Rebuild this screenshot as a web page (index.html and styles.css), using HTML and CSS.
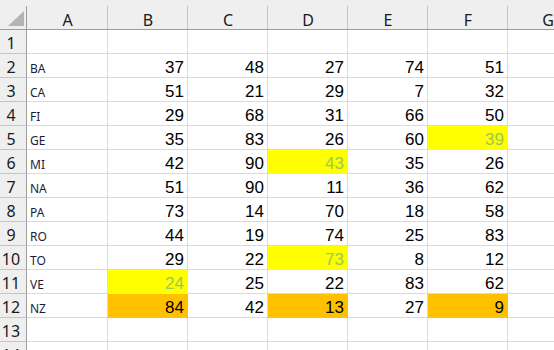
FILE: index.html
```html
<!DOCTYPE html>
<html lang="en">
<head>
  <meta charset="UTF-8">
  <title>Sheet1</title>
  <link rel="stylesheet" href="styles.css">
</head>
<body>

<div class="sheet" id="sheet"></div>

<script>
  // data per baris: label kolom A, lalu nilai B..F
  const rows = [
    [],
    ['BA', 37, 48, 27, 74, 51],
    ['CA', 51, 21, 29, 7, 32],
    ['FI', 29, 68, 31, 66, 50],
    ['GE', 35, 83, 26, 60, 39],
    ['MI', 42, 90, 43, 35, 26],
    ['NA', 51, 90, 11, 36, 62],
    ['PA', 73, 14, 70, 18, 58],
    ['RO', 44, 19, 74, 25, 83],
    ['TO', 29, 22, 73, 8, 12],
    ['VE', 24, 25, 22, 83, 62],
    ['NZ', 84, 42, 13, 27, 9],
    [],
    []
  ];

  // sel yang diwarnai: "baris-kolom" -> kelas
  const marks = {
    '5-5': 'hi', '6-3': 'hi', '10-3': 'hi', '11-1': 'hi',
    '12-1': 'max', '12-3': 'max', '12-5': 'max'
  };

  const sheet = document.getElementById('sheet');
  const letters = ['A', 'B', 'C', 'D', 'E', 'F', 'G'];

  function cell(cls, text) {
    const div = document.createElement('div');
    div.className = cls;
    if (text !== undefined) div.textContent = text;
    sheet.appendChild(div);
  }

  cell('corner');
  letters.forEach(l => cell('col-head', l));

  rows.forEach((row, i) => {
    const r = i + 1;
    cell('row-head', r);
    for (let c = 0; c < 7; c++) {
      const value = row[c];
      let cls = 'cell';
      if (c === 0) cls += ' label';
      if (marks[r + '-' + c]) cls += ' ' + marks[r + '-' + c];
      cell(cls, value);
    }
  });
</script>

</body>
</html>
```

FILE: styles.css
```css
body {
  margin: 0;
  background: #fff;
  overflow: hidden;
}
.sheet {
  display: grid;
  grid-template-columns: 27px 81px repeat(6, 80px);
  grid-template-rows: 30px;
  grid-auto-rows: 24px;
  font-family: "Liberation Sans", Arial, sans-serif;
}
.sheet > div {
  box-sizing: border-box;
  display: flex;
  align-items: flex-end;
  min-width: 0;
  overflow: hidden;
  white-space: nowrap;
}
.corner {
  background: #efefef;
  border-bottom: 1px solid #9e9e9e;
  background-image: linear-gradient(#9e9e9e, #9e9e9e);
  background-position: right bottom;
  background-size: 1px 23px;
  background-repeat: no-repeat;
  justify-content: flex-end;
  padding: 0 3px 3px 0;
}
.corner::after {
  content: "";
  width: 16px;
  height: 15px;
  background: #b4b4b4;
  clip-path: polygon(100% 0, 100% 100%, 0 100%);
}
.col-head {
  background: #efefef;
  background-image: linear-gradient(#c4c4c4, #c4c4c4);
  background-position: right bottom;
  background-size: 1px 23px;
  background-repeat: no-repeat;
  border-bottom: 1px solid #9e9e9e;
  justify-content: center;
  font-family: "Noto Sans", sans-serif;
  font-size: 16px;
  line-height: 16px;
  padding-bottom: 1px;
  color: #1a1a1a;
}
.row-head {
  background: #efefef;
  border-right: 1px solid #9e9e9e;
  border-bottom: 1px solid #c4c4c4;
  justify-content: center;
  padding-right: 4px;
  font-family: "Noto Sans", sans-serif;
  font-size: 16px;
  line-height: 18px;
  padding-bottom: 1px;
  color: #1a1a1a;
}
.cell {
  border-right: 1px solid #dadada;
  border-bottom: 1px solid #dadada;
  justify-content: flex-end;
  padding-right: 3px;
  font-size: 17px;
  line-height: 18px;
  color: #000;
}
.cell.label {
  justify-content: flex-start;
  padding: 0 0 1px 3px;
  font-family: "Noto Sans", sans-serif;
  font-size: 12px;
  line-height: 14px;
  color: #1c1c3a;
}
.cell.hi {
  background: #ffff00;
  border-color: #ffff00;
  color: #98c85a;
}
.cell.max {
  background: #ffc000;
  border-color: #ffc000;
}
```
